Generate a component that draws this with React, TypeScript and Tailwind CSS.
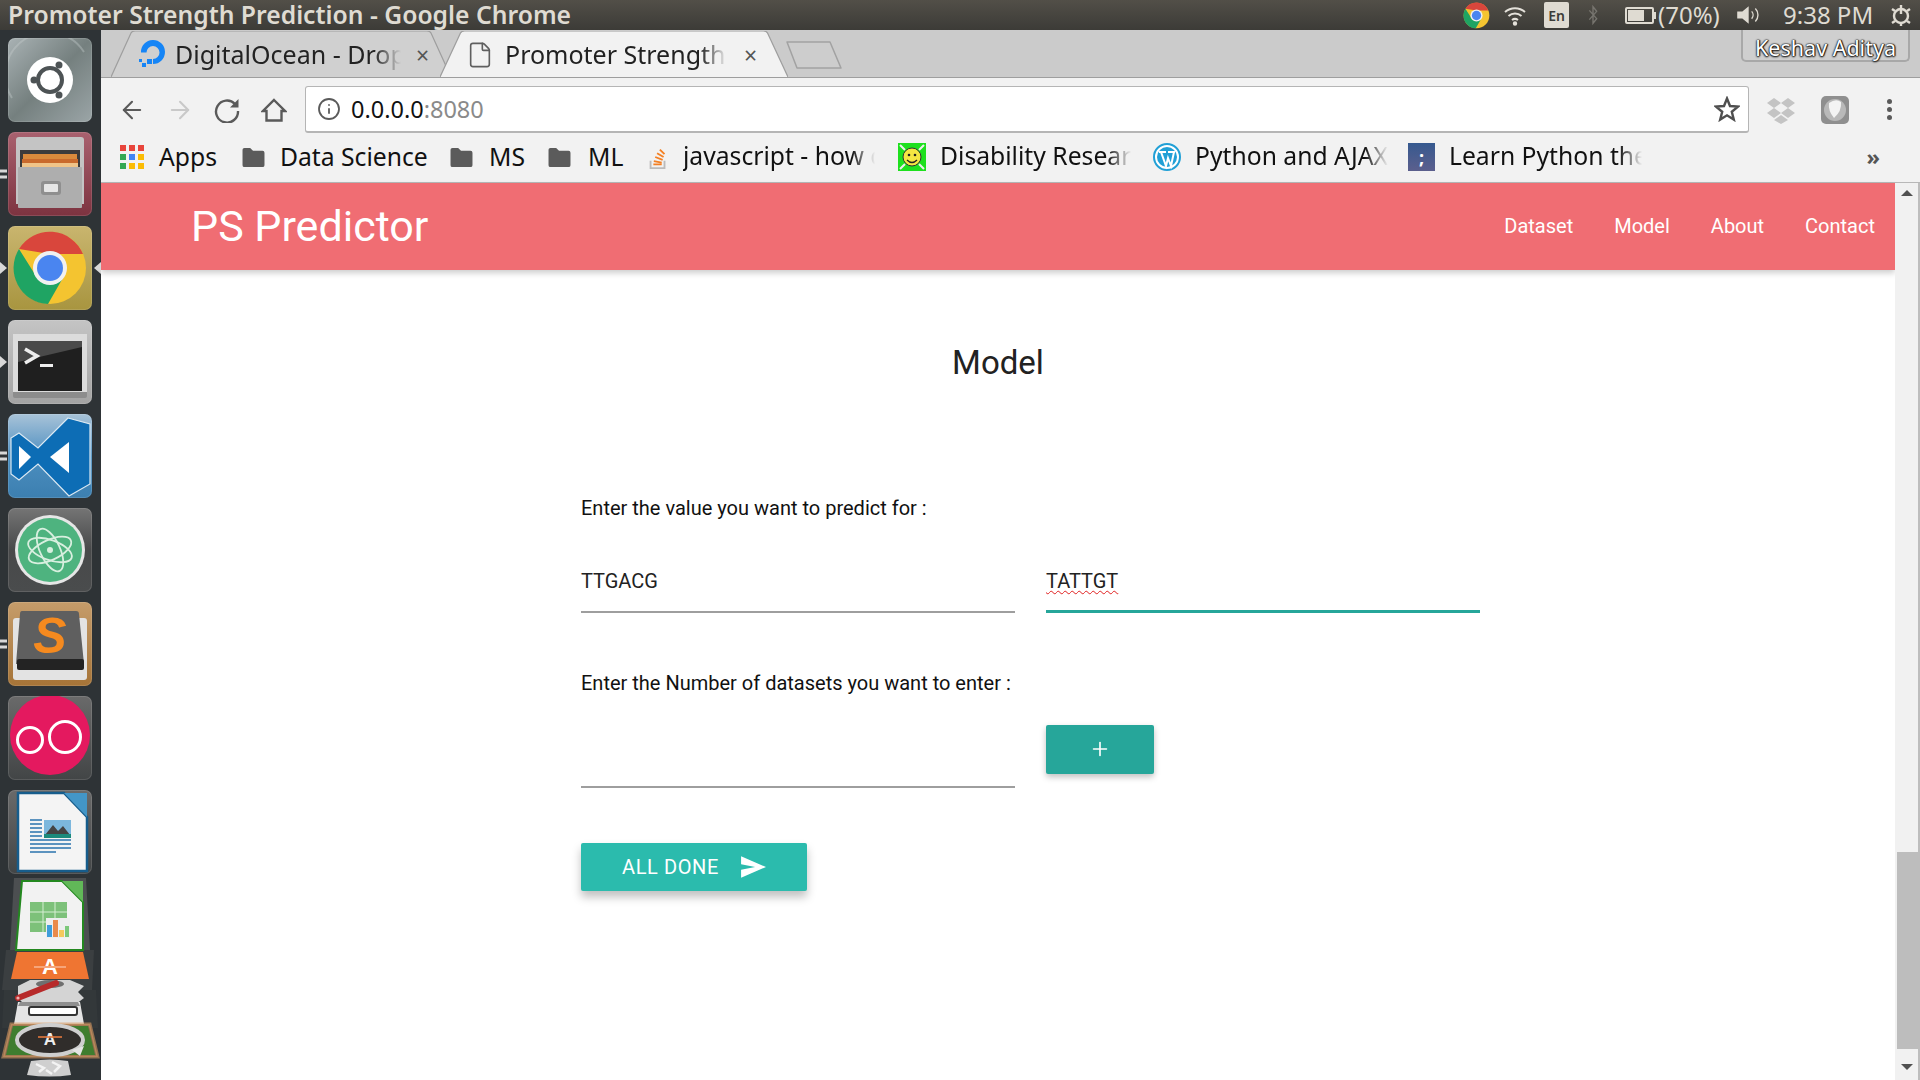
import { ArrowLeft, ArrowRight, Info, Plus, File } from "lucide-react";
import type { ReactNode } from "react";

const sans = "font-['Noto_Sans',sans-serif]";
const roboto = "font-['Roboto',sans-serif]";

function Tile({ children, className = "" }: { children: ReactNode; className?: string }) {
  return (
    <div className={"relative h-[84px] w-[84px] shrink-0 overflow-hidden rounded-[7px] shadow-[inset_0_0_0_1px_rgba(255,255,255,0.12)] " + className}>
      <svg viewBox="0 0 84 84" className="h-full w-full">{children}</svg>
    </div>
  );
}

function Pip({ kind }: { kind: "two" | "arrow" | "arrows" | "none" }) {
  if (kind === "two") {
    return (
      <div className="absolute left-0 top-1/2 flex -translate-y-1/2 flex-col gap-[3px]">
        <div className="h-[3px] w-[7px] bg-[#d8d8d8]" />
        <div className="h-[3px] w-[7px] bg-[#d8d8d8]" />
      </div>
    );
  }
  if (kind === "arrow" || kind === "arrows") {
    return (
      <>
        <div className="absolute left-0 top-1/2 h-0 w-0 -translate-y-1/2 border-y-[6px] border-l-[7px] border-y-transparent border-l-[#d8d8d8]" />
        {kind === "arrows" && (
          <div className="absolute right-0 top-1/2 h-0 w-0 -translate-y-1/2 border-y-[6px] border-r-[7px] border-y-transparent border-r-[#d8d8d8]" />
        )}
      </>
    );
  }
  return null;
}

function DockItem({ pip = "none", children }: { pip?: "two" | "arrow" | "arrows" | "none"; children: ReactNode }) {
  return (
    <div className="relative flex h-[84px] w-[101px] shrink-0 items-center pl-2">
      <Pip kind={pip} />
      {children}
    </div>
  );
}

function ChromeLogo({ cx, cy, r }: { cx: number; cy: number; r: number }) {
  const k = r / 36;
  return (
    <g transform={`translate(${cx} ${cy}) scale(${k})`}>
      <circle r="36" fill="#f4c430" />
      <path d="M-31 -19 A36 36 0 0 1 33 -14 L0 -14 Z" fill="#d9463c" />
      <path d="M-31 -19 A36 36 0 0 0 -2 36 L14 8 L-14 8 Z" fill="#1fa463" />
      <circle r="17" fill="#f1f1f1" />
      <circle r="13" fill="#4a85f0" />
    </g>
  );
}

function Dock() {
  return (
    <div className="relative flex w-[101px] shrink-0 flex-col overflow-hidden bg-[#2e3336]">
      <div className="flex flex-col gap-[10px] pt-2">
        <DockItem>
          <Tile className="bg-gradient-to-br from-[#a9b2b4] via-[#75807f] to-[#9ba5a7]">
            <path d="M4 60 A42 42 0 0 1 76 14" fill="none" stroke="#c3cacb" strokeOpacity="0.4" strokeWidth="2" />
            <circle cx="42" cy="42" r="23" fill="#fff" />
            <circle cx="42" cy="42" r="12" fill="none" stroke="#4d5355" strokeWidth="4" />
            <circle cx="51" cy="27" r="3.5" fill="#4d5355" />
            <circle cx="26" cy="42" r="3.5" fill="#4d5355" />
            <circle cx="51" cy="57" r="3.5" fill="#4d5355" />
          </Tile>
        </DockItem>
        <DockItem pip="two">
          <Tile className="bg-gradient-to-b from-[#a9616f] to-[#7d3340]">
            <path d="M8 8 Q8 5 11 5 H73 Q76 5 76 8 V72 H8 Z" fill="#c4c4c4" />
            <rect x="12" y="18" width="60" height="20" fill="#3b3b3b" />
            <rect x="15" y="22" width="54" height="6" fill="#d88a3c" />
            <rect x="14" y="27" width="56" height="5" fill="#c96a2c" />
            <rect x="14" y="31" width="56" height="5" fill="#f0c488" />
            <rect x="10" y="35" width="64" height="41" rx="1" fill="#aeaeae" />
            <rect x="33" y="49" width="20" height="14" rx="3" fill="#8f8f8f" />
            <rect x="36" y="52" width="14" height="8" rx="1" fill="#e6e6e6" />
          </Tile>
        </DockItem>
        <DockItem pip="arrows">
          <Tile className="bg-gradient-to-b from-[#c9b56e] to-[#a8953f]">
            <ChromeLogo cx={42} cy={42} r={36} />
          </Tile>
        </DockItem>
        <DockItem pip="arrow">
          <Tile className="bg-gradient-to-b from-[#c4c4c4] to-[#a3a3a3]">
            <rect x="5" y="14" width="74" height="64" rx="2" fill="#8c8c8c" />
            <rect x="5" y="14" width="74" height="58" fill="#dcdcdc" />
            <rect x="10" y="21" width="64" height="50" fill="#1f1f1f" />
            <path d="M10 21 H74 V27 L10 42 Z" fill="#4a4a4a" />
            <path d="M17 29 L29 36 L17 43" fill="none" stroke="#eee" strokeWidth="3.5" />
            <rect x="32" y="44" width="13" height="3" fill="#eee" />
          </Tile>
        </DockItem>
        <DockItem pip="two">
          <Tile className="bg-gradient-to-b from-[#a8c3d8] via-[#4c8fc0] to-[#3c7fb0]">
            <path d="M60 4 L82 10 V70 L61 82 L30 50 L11 66 L3 60 V24 L11 19 L30 34 Z" fill="#0d6db5" stroke="#dbe9f3" strokeWidth="1.2" />
            <path d="M11 32 L23 43 L11 55 Z" fill="#fff" />
            <path d="M61 28 V59 L42 43 Z" fill="#fff" />
          </Tile>
        </DockItem>
        <DockItem>
          <Tile className="bg-gradient-to-b from-[#757575] via-[#48494a] to-[#4a4c4d]">
            <circle cx="42" cy="42" r="35" fill="#e6e6e6" />
            <circle cx="42" cy="42" r="32" fill="#4eb37f" />
            <g fill="none" stroke="#d8efdf" strokeWidth="1.8">
              <ellipse cx="42" cy="42" rx="23" ry="10" transform="rotate(-25 42 42)" />
              <ellipse cx="42" cy="42" rx="23" ry="10" transform="rotate(65 42 42)" />
              <ellipse cx="42" cy="42" rx="23" ry="10" transform="rotate(20 42 42)" />
            </g>
            <circle cx="42" cy="42" r="3" fill="#d8efdf" />
          </Tile>
        </DockItem>
        <DockItem pip="two">
          <Tile className="bg-gradient-to-b from-[#c59c6a] to-[#a67437]">
            <rect x="5" y="16" width="74" height="62" rx="3" fill="#e3e3e3" />
            <path d="M14 9 H68 Q71 9 71 12 L76 62 H8 L12 12 Q12 9 14 9 Z" fill="#5f5f5f" />
            <rect x="9" y="57" width="67" height="11" rx="2" fill="#232323" />
            <text x="42" y="51" textAnchor="middle" fontSize="50" fontWeight="700" fontStyle="italic" fill="#f58a1f" fontFamily="Liberation Sans, sans-serif">S</text>
          </Tile>
        </DockItem>
        <DockItem>
          <Tile className="bg-gradient-to-b from-[#6a6a6a] to-[#424546]">
            <circle cx="42" cy="39" r="40" fill="#e4195f" />
            <circle cx="22" cy="44" r="12.5" fill="none" stroke="#fff" strokeWidth="3" />
            <circle cx="57" cy="41" r="15.5" fill="none" stroke="#fff" strokeWidth="3" />
          </Tile>
        </DockItem>
        <DockItem>
          <Tile className="bg-gradient-to-b from-[#6a6a6a] to-[#424546]">
            <path d="M10 3 H56 L79 27 V81 H10 Z" fill="#f4f4f4" stroke="#175d8c" strokeWidth="2.5" />
            <path d="M56 3 H79 V27 Z" fill="#4396c7" />
            <g stroke="#2a73ad" strokeWidth="1.6">
              <path d="M22 30 H34 M22 34 H34 M22 38 H34 M22 42 H34 M22 46 H34" />
              <path d="M22 50 H63 M22 54 H63 M22 58 H63 M22 62 H48" />
            </g>
            <rect x="36" y="30" width="27" height="18" fill="#7cb7dd" />
            <path d="M37 45 L45 35 L50 41 L55 36 L62 45 Z" fill="#444" />
            <path d="M36 44 H63 V48 H36 Z" fill="#1c8a7c" />
          </Tile>
        </DockItem>
      </div>
      <svg viewBox="0 0 101 202" className="mt-[4px] h-[202px] w-[101px] shrink-0">
        <path d="M14 0 H86 L90 72 H10 Z" fill="#4c4f51" />
        <path d="M6 72 H94 L92 112 H2 Z" fill="#3b3f41" />
        <path d="M4 112 H96 L98 150 H2 Z" fill="#33383a" />
        <path d="M22 3 H62 L83 24 V72 H16 Z" fill="#f2f2f2" stroke="#23881f" strokeWidth="2" />
        <path d="M62 3 H83 V24 Z" fill="#61b858" />
        <rect x="30" y="24" width="37" height="30" fill="#7dc17a" />
        <path d="M30 34 H67 M30 44 H67 M43 24 V54 M55 24 V54" stroke="#d6eed2" />
        <rect x="46" y="40" width="24" height="20" fill="#eee" />
        <rect x="47" y="47" width="5" height="12" fill="#3f9ddb" />
        <rect x="53" y="42" width="5" height="17" fill="#ea8a4b" />
        <rect x="59" y="52" width="5" height="7" fill="#f4c95d" />
        <rect x="65" y="48" width="4" height="11" fill="#7cc87a" />
        <path d="M17 74 H83 L89 101 H11 Z" fill="#ef7532" />
        <text x="50" y="96" textAnchor="middle" fontSize="22" fontWeight="700" fill="#fff" fontFamily="Liberation Sans, sans-serif">A</text>
        <path d="M34 89 H66" stroke="#f6a57a" strokeWidth="2" />
        <path d="M18 108 L30 102 H70 L84 108 L78 114 L84 120 L76 126 H24 L18 120 Z" fill="#d4d4d4" />
        <ellipse cx="50" cy="106" rx="14" ry="4" fill="#6f6f6f" />
        <path d="M18 120 L56 105" stroke="#b72a2a" strokeWidth="6" strokeLinecap="round" />
        <circle cx="18" cy="120" r="1.6" fill="#e9b0b0" />
        <path d="M14 146 L18 124 H80 L84 146 Z" fill="#e4e4e4" />
        <path d="M20 124 H78 L80 128 H18 Z" fill="#8f8f8f" />
        <rect x="29" y="129" width="48" height="8" rx="2" fill="#fff" stroke="#333" strokeWidth="2" />
        <path d="M11 146 H90 L98 179 H3 Z" fill="#d79a62" fillOpacity="0.55" stroke="#d79a62" strokeWidth="3" strokeOpacity="0.6" />
        <path d="M13 148 H88 L95 177 H6 Z" fill="#3f7d2f" />
        <ellipse cx="50" cy="162" rx="33" ry="15" fill="#302d2b" stroke="#cfcfcf" strokeWidth="4" />
        <path d="M72 172 L84 168 L80 178 Z" fill="#e4e4e4" />
        <text x="50" y="167" textAnchor="middle" fontSize="17" fontWeight="700" fill="#eee" fontFamily="Liberation Sans, sans-serif">A</text>
        <path d="M38 159 H62" stroke="#e2773e" strokeWidth="1.6" />
        <path d="M31 183 Q50 180 68 183 L71 197 Q50 200 27 197 Z" fill="#cfcfcf" />
        <path d="M36 186 L44 190 L39 194 M52 184 L60 188 L54 194 M46 192 L52 196" stroke="#f3f3f3" strokeWidth="2.5" fill="none" />
      </svg>
    </div>
  );
}

function TopBar() {
  return (
    <div className={"flex h-[30px] shrink-0 items-center bg-gradient-to-b from-[#524f48] to-[#3c3b37] pl-2 text-[#dfdbd2] " + sans}>
      <span className="text-[24.7px] font-semibold leading-none">Promoter Strength Prediction - Google Chrome</span>
      <div className="ml-auto flex items-center">
        <svg viewBox="0 0 84 84" className="h-[27px] w-[27px]"><ChromeLogo cx={42} cy={42} r={40} /></svg>
        <svg viewBox="0 0 24 24" className="ml-[13px] h-[24px] w-[24px]" fill="none" stroke="#e4e1da" strokeWidth="2">
          <path d="M2 9 A15 15 0 0 1 22 9 M5.5 13 A10 10 0 0 1 18.5 13 M9 17 A5 5 0 0 1 15 17" />
          <circle cx="12" cy="20.5" r="1.2" fill="#e4e1da" />
        </svg>
        <div className="ml-[17px] flex h-[26px] w-[25px] items-center justify-center rounded-[2px] bg-[#dfdbd2] text-[14px] font-semibold text-[#3c3b37]">En</div>
        <svg viewBox="0 0 12 24" className="ml-[18px] h-[22px] w-[12px]" fill="none" stroke="#77756f" strokeWidth="1.5">
          <path d="M2 7 L10 16 L6 21 V3 L10 8 L2 17" />
        </svg>
        <div className="relative ml-[26px] h-[17px] w-[29px] rounded-[2px] border-2 border-[#dfdbd2] p-[1px]">
          <div className="h-full w-[70%] bg-[#dfdbd2]" />
        </div>
        <div className="h-[7px] w-[2px] bg-[#dfdbd2]" />
        <span className="ml-[2px] w-[65px] text-[24px] leading-none">(70%)</span>
        <svg viewBox="0 0 26 24" className="ml-[12px] h-[22px] w-[26px]" fill="none" stroke="#dfdbd2" strokeWidth="1.5">
          <path d="M2 9 H7 L13 4 V20 L7 15 H2 Z" fill="#dfdbd2" />
          <path d="M17 8 A6 6 0 0 1 17 16 M21 5 A10 10 0 0 1 21 19" />
        </svg>
        <span className="ml-[22px] w-[92px] whitespace-nowrap text-[24px] leading-none">9:38 PM</span>
        <svg viewBox="0 0 24 24" className="ml-[14px] mr-[7px] h-[24px] w-[24px]" fill="none" stroke="#dfdbd2" strokeWidth="2.4">
          <circle cx="12" cy="13" r="7" />
          <path d="M12 2 V11 M12 20 V23 M3 6 L6 8 M21 6 L18 8 M3 20 L6 18 M21 20 L18 18" />
        </svg>
      </div>
    </div>
  );
}

function Tab({ active, width, children }: { active?: boolean; width: string; children: ReactNode }) {
  return (
    <div className={"relative flex h-[46px] shrink-0 items-center " + width}>
      <svg viewBox="0 0 340 46" preserveAspectRatio="none" className="absolute inset-0 h-full w-full">
        <path
          d="M0 46 L20 2 Q21 0 24 0 H316 Q319 0 320 2 L340 46"
          fill={active ? "#f2f2f2" : "#d0d0d0"}
          stroke="#9e9e9e"
          strokeWidth="1.2"
        />
      </svg>
      <div className="relative flex h-full w-full items-center pt-[2px]">{children}</div>
    </div>
  );
}

function FadeText({ width, children, className = "" }: { width: string; children: ReactNode; className?: string }) {
  return (
    <span className={"block overflow-hidden whitespace-nowrap [mask-image:linear-gradient(to_right,black_88%,transparent)] " + width + " " + className}>
      {children}
    </span>
  );
}

function TabStrip() {
  return (
    <div className={"relative flex h-[48px] shrink-0 items-end border-b border-[#9e9e9e] bg-[#cbcbcb] pl-[10px] " + sans}>
      <Tab width="w-[340px]">
        <svg viewBox="0 0 30 30" className="ml-[27px] h-[30px] w-[30px]">
          <path d="M15 24 V19 A6.5 6.5 0 1 0 8.5 12.5 H3 A12 12 0 1 1 15 24 Z" fill="#1685f6" />
          <rect x="9" y="19" width="5" height="5" fill="#1685f6" />
          <rect x="4" y="23" width="4" height="4" fill="#1685f6" />
          <rect x="1" y="19" width="3" height="3" fill="#1685f6" />
        </svg>
        <FadeText width="w-[226px]" className="ml-[7px] text-[25px] text-[#222]">DigitalOcean - Droplets</FadeText>
        <span className="ml-[15px] text-[23px] leading-none text-[#555]">×</span>
      </Tab>
      <div className="-ml-[11px]">
        <Tab active width="w-[348px]">
          <File className="ml-[26px] h-[28px] w-[28px] text-[#5f5f5f]" strokeWidth={1.4} />
          <FadeText width="w-[222px]" className="ml-[11px] text-[25px] text-[#222]">Promoter Strength Prediction</FadeText>
          <span className="ml-[17px] text-[23px] leading-none text-[#555]">×</span>
        </Tab>
      </div>
      <svg viewBox="0 0 56 28" className="mb-[8px] ml-[-2px] h-[28px] w-[56px]">
        <path d="M1 1 H44 L55 27 H11 Z" fill="#cdcdcd" stroke="#a2a2a2" strokeWidth="1.5" strokeLinejoin="round" />
      </svg>
      <div className="absolute right-[10px] top-0 flex h-[32px] w-[169px] items-center justify-center rounded-b-[5px] border-x-2 border-b-2 border-[#a8a8a8] bg-[#cfcfcf] pt-[6px] text-[21.5px] leading-none text-white [text-shadow:0_0_1px_#111,0_1px_2px_#111,0_0_2px_#111,1px_0_1px_#222]">
        Keshav Aditya
      </div>
    </div>
  );
}

function Toolbar() {
  return (
    <div className={"flex h-[63px] shrink-0 items-center bg-[#f2f2f2] pl-[17px] pr-[28px] " + sans}>
      <ArrowLeft className="h-[28px] w-[28px] text-[#5a5a5a]" strokeWidth={1.8} />
      <ArrowRight className="ml-[20px] h-[28px] w-[28px] text-[#c9c9c9]" strokeWidth={1.8} />
      <svg viewBox="0 0 26 26" className="ml-[20px] h-[26px] w-[26px]" fill="none">
        <path d="M21 7 A11 11 0 1 0 24 14" stroke="#5a5a5a" strokeWidth="2.4" />
        <path d="M24.5 2 V10.5 H16 Z" fill="#5a5a5a" />
      </svg>
      <svg viewBox="0 0 26 26" className="ml-[21px] h-[26px] w-[26px]" fill="none">
        <path d="M13 3 L24 14 H20.5 V23.5 H5.5 V14 H2 Z" stroke="#5a5a5a" strokeWidth="2.4" strokeLinejoin="miter" />
      </svg>
      <div className="ml-[18px] flex h-[47px] flex-1 items-center rounded-[3px] border border-b-2 border-[#b5b5b5] bg-white pl-[11px] pr-[8px]">
        <Info className="h-[24px] w-[24px] text-[#5a5a5a]" strokeWidth={1.8} />
        <span className="ml-[10px] pt-[1px] text-[23.5px] text-[#111]">0.0.0.0<span className="text-[#8a8a8a]">:8080</span></span>
        <svg viewBox="0 0 26 26" className="ml-auto h-[26px] w-[26px]" fill="none">
          <path d="M13 2.5 L16 10 L24 10.6 L17.8 15.8 L19.8 23.6 L13 19.3 L6.2 23.6 L8.2 15.8 L2 10.6 L10 10 Z" stroke="#4f4f4f" strokeWidth="2.4" />
        </svg>
      </div>
      <svg viewBox="0 0 28 28" className="ml-[18px] h-[28px] w-[28px]" fill="#c4c4c4">
        <path d="M7 2 L14 7 L7 12 L0 7 Z M21 2 L28 7 L21 12 L14 7 Z M7 12 L14 17 L7 22 L0 17 Z M21 12 L28 17 L21 22 L14 17 Z M14 19 L21 24 L14 28 L7 24 Z" />
      </svg>
      <svg viewBox="0 0 28 28" className="ml-[26px] h-[28px] w-[28px]">
        <rect width="28" height="28" rx="5" fill="#8f8f8f" />
        <circle cx="14" cy="14" r="11" fill="#b9b9b9" />
        <path d="M8 7 Q15 2 20 6 Q21 15 13 22 Q7 15 8 7 Z" fill="#f4f4f4" />
      </svg>
      <div className="ml-[38px] flex flex-col gap-[3px]">
        <div className="h-[5px] w-[5px] rounded-full bg-[#5a5a5a]" />
        <div className="h-[5px] w-[5px] rounded-full bg-[#5a5a5a]" />
        <div className="h-[5px] w-[5px] rounded-full bg-[#5a5a5a]" />
      </div>
    </div>
  );
}

function Folder({ className = "" }: { className?: string }) {
  return (
    <svg viewBox="0 0 25 22" className={"h-[21px] w-[25px] shrink-0 " + className}>
      <path d="M1 3 Q1 1 3 1 H9 L12 4 H22 Q24 4 24 6 V19 Q24 21 22 21 H3 Q1 21 1 19 Z" fill="#5b5b5b" />
    </svg>
  );
}

function Bookmarks() {
  const dots = ["#e8453c", "#e8453c", "#e8453c", "#34a853", "#4285f4", "#fbbc05", "#34a853", "#fbbc05", "#fbbc05"];
  return (
    <div className={"flex h-[42px] shrink-0 items-center border-b border-[#b8b8b8] bg-[#f2f2f2] pb-[9px] pl-[19px] text-[24.7px] leading-none text-[#111] " + sans}>
      <div className="grid h-[24px] w-[24px] shrink-0 grid-cols-3 gap-[3px]">
        {dots.map((c, i) => (
          <div key={i} className="h-[6px] w-[6px]" style={{ backgroundColor: c }} />
        ))}
      </div>
      <span className="ml-[15px] w-[82px] pt-[1px]">Apps</span>
      <Folder />
      <span className="ml-[14px] w-[169px] whitespace-nowrap pt-[1px]">Data Science</span>
      <Folder />
      <span className="ml-[15px] w-[58px] pt-[1px]">MS</span>
      <Folder />
      <span className="ml-[16px] w-[60px] pt-[1px]">ML</span>
      <svg viewBox="0 0 20 28" className="h-[26px] w-[20px] shrink-0" fill="none">
        <path d="M2 18 V26 H17 V18" stroke="#bcbbbb" strokeWidth="2" />
        <path d="M5 22 H14 M5.5 18.5 L14 20 M7 14 L15 17 M9 10 L16 14 M12 6 L17 11" stroke="#f48024" strokeWidth="2" />
      </svg>
      <FadeText width="w-[192px]" className="ml-[15px] pb-[5px] pt-[4px]">javascript - how can I</FadeText>
      <svg viewBox="0 0 28 28" className="ml-[23px] h-[28px] w-[28px] shrink-0">
        <rect width="28" height="28" fill="#1ee01e" />
        <circle cx="14" cy="14" r="9" fill="#f5e642" stroke="#333" />
        <circle cx="11" cy="12" r="1.3" fill="#222" />
        <circle cx="17" cy="12" r="1.3" fill="#222" />
        <path d="M9 17 Q14 22 19 17" fill="none" stroke="#222" strokeWidth="1.3" />
        <path d="M2 2 L7 7 M26 2 L21 7 M2 26 L7 21 M26 26 L21 21" stroke="#eee" strokeWidth="2" />
      </svg>
      <FadeText width="w-[191px]" className="ml-[14px] pb-[5px] pt-[4px]">Disability Research</FadeText>
      <svg viewBox="0 0 28 28" className="ml-[22px] h-[28px] w-[28px] shrink-0">
        <circle cx="14" cy="14" r="13" fill="#fff" stroke="#21a0d6" strokeWidth="2" />
        <circle cx="14" cy="14" r="10" fill="#21a0d6" />
        <path d="M6 9 H13 M15 9 H22 M8 9 L13 23 L15 15 L18 23 L21 9" fill="none" stroke="#fff" strokeWidth="2" />
      </svg>
      <FadeText width="w-[193px]" className="ml-[14px] pb-[5px] pt-[4px]">Python and AJAX tutorial</FadeText>
      <div className="ml-[20px] flex h-[28px] w-[27px] shrink-0 items-center justify-center bg-gradient-to-b from-[#35598f] to-[#5b5f8d] text-[18px] font-bold text-white">;</div>
      <FadeText width="w-[193px]" className="ml-[14px] pb-[5px] pt-[4px]">Learn Python the Hard</FadeText>
      <span className="ml-auto mr-[40px] pb-[3px] text-[22px] font-bold text-[#555]">»</span>
    </div>
  );
}

function Field({ children }: { children?: ReactNode }) {
  return (
    <div className="flex h-full w-full items-center border-b-2 border-[#9e9e9e] pb-[5px] text-[20px] text-[#222]">{children}</div>
  );
}

function Page() {
  const links = ["Dataset", "Model", "About", "Contact"];
  return (
    <div className={"flex min-h-0 flex-1 " + roboto}>
      <div className="min-w-0 flex-1 bg-white">
        <div className="flex h-[87px] items-center bg-[#f06d73] pl-[90px] pr-[20px] text-white shadow-[0_3px_6px_rgba(0,0,0,0.2)]">
          <span className="text-[43px] leading-none">PS Predictor</span>
          <div className="ml-auto flex gap-[41px] pb-[2px] text-[20px]">
            {links.map((l) => (
              <span key={l}>{l}</span>
            ))}
          </div>
        </div>
        <h1 className="mt-[73px] h-[40px] text-center text-[33px] leading-[40px] text-[#222]">Model</h1>
        <div className="ml-[480px] w-[899px]">
          <p className="mt-[110px] h-[30px] text-[20px] leading-[30px] text-[#111]">Enter the value you want to predict for :</p>
          <div className="mt-[33px] grid h-[57px] grid-cols-2 gap-[31px]">
            <Field>TTGACG</Field>
            <div className="flex h-full items-center border-b-[3px] border-[#26a69a] pb-[4px] text-[20px] text-[#222]">
              <span className="underline decoration-[#e02020] decoration-wavy decoration-1 underline-offset-[2px]">TATTGT</span>
            </div>
          </div>
          <p className="mt-[55px] h-[30px] text-[20px] leading-[30px] text-[#111]">Enter the Number of datasets you want to enter :</p>
          <div className="mt-[27px] grid h-[63px] grid-cols-2 gap-[31px]">
            <Field />
            <div>
              <button className="flex h-[49px] w-[108px] items-center justify-center rounded-[2px] bg-[#26a69a] pb-[2px] text-white shadow-[0_3px_6px_rgba(0,0,0,0.25)]">
                <Plus className="h-[22px] w-[22px]" strokeWidth={1.8} />
              </button>
            </div>
          </div>
          <button className="mt-[55px] flex h-[48px] w-[226px] items-center justify-center rounded-[2px] bg-[#2bbbad] text-[20px] tracking-[0.6px] text-white shadow-[0_6px_10px_rgba(0,0,0,0.25)]">
            ALL DONE
            <svg viewBox="0 0 24 24" className="ml-[21px] h-[26px] w-[26px]" fill="#fff">
              <path d="M1 2 L24 12 L1 22 V14.5 L14 12 L1 9.5 Z" />
            </svg>
          </button>
        </div>
      </div>
      <div className="flex w-[25px] shrink-0 flex-col items-center border-r-2 border-[#bdbdbd] bg-[#f1f1f1]">
        <div className="mt-[7px] h-0 w-0 border-x-[6px] border-b-[6px] border-x-transparent border-b-[#505050]" />
        <div className="mt-[656px] h-[197px] w-[21px] self-end bg-[#bdbdbd]" />
        <div className="mt-[15px] h-0 w-0 border-x-[6px] border-t-[6px] border-x-transparent border-t-[#505050]" />
      </div>
    </div>
  );
}

export default function App() {
  return (
    <div className="flex h-screen w-full flex-col overflow-hidden bg-white">
      <TopBar />
      <div className="flex min-h-0 flex-1">
        <Dock />
        <div className="flex min-w-0 flex-1 flex-col">
          <TabStrip />
          <Toolbar />
          <Bookmarks />
          <Page />
        </div>
      </div>
    </div>
  );
}
